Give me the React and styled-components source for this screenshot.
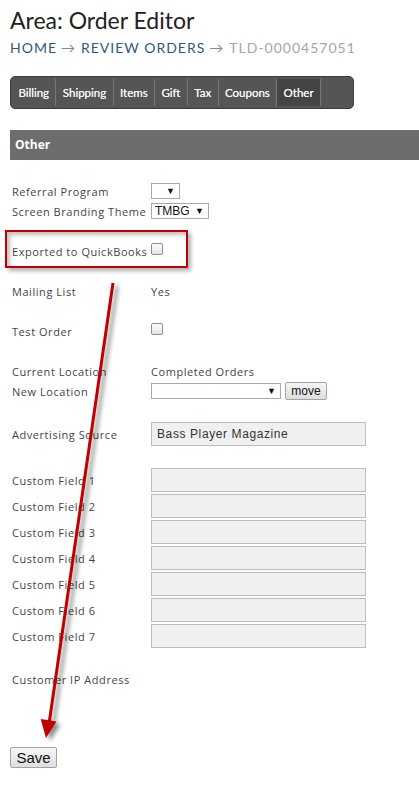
import React from 'react'
import styled, { createGlobalStyle } from 'styled-components'

const GlobalStyle = createGlobalStyle`
  body {
    margin: 0;
    background: #fff;
    font-family: "Open Sans", Arial, sans-serif;
  }
`

const Page = styled.div`
  position: relative;
  box-sizing: border-box;
  min-height: 786px;
  padding: 6px 0 20px 10px;
  overflow: hidden;
`

const Title = styled.h1`
  margin: 0;
  font-family: Lato, "Open Sans", sans-serif;
  font-weight: 400;
  font-size: 23px;
  line-height: 28px;
  color: #222;
`

const Crumbs = styled.div`
  margin-top: 5px;
  font-family: Lato, "Open Sans", sans-serif;
  font-size: 14px;
  line-height: 18px;
  letter-spacing: 1px;
  text-transform: uppercase;
`

const Crumb = styled.span`
  color: ${p => (p.$current ? '#a6a6a6' : '#2b5c79')};
`

const CrumbArrow = styled.span`
  color: #888;
  margin: 0 5px 0 4px;
`

const TabBar = styled.nav`
  display: flex;
  box-sizing: border-box;
  width: 344px;
  height: 33px;
  margin-top: 19px;
  padding: 2px 1px;
  background: #555;
  border: 1px solid #3d3d3d;
  border-radius: 5px;
`

const Tab = styled.a`
  display: flex;
  align-items: center;
  padding: 0 6.4px;
  border-right: 1px solid #777;
  background: ${p => (p.$active ? '#444' : 'transparent')};
  color: #f4f4f4;
  font-family: Lato, sans-serif;
  font-size: 11.5px;
  font-weight: 400;
  text-shadow: 0 0 0.4px #fff;
  text-decoration: none;
`

const SectionHeader = styled.h2`
  margin: 21px 0 0;
  height: 30px;
  padding-left: 5px;
  background: #6d6d6d;
  color: #fff;
  font-family: "Open Sans", sans-serif;
  font-size: 12px;
  font-weight: 700;
  line-height: 30px;
`

const Form = styled.div`
  display: flex;
  flex-direction: column;
  margin-top: 21px;
  padding-left: 2px;
`

const Row = styled.div`
  position: relative;
  display: grid;
  grid-template-columns: 139px 1fr;
  align-items: center;
  height: ${p => p.$h || 20}px;
`

const Label = styled.span`
  font-size: 11px;
  letter-spacing: 0.55px;
  color: #454545;
  white-space: nowrap;
`

const Value = styled.span`
  display: flex;
  align-items: center;
  gap: 4px;
  font-size: 11px;
  letter-spacing: 0.55px;
  color: #454545;
`

const Select = styled.div`
  display: inline-flex;
  align-items: center;
  justify-content: space-between;
  box-sizing: border-box;
  width: ${p => p.$w}px;
  height: 16px;
  padding: 0 4px 0 3px;
  background: #fff;
  border: 1px solid #a9a9a9;
  font-family: Arial, "Liberation Sans", sans-serif;
  font-size: 12px;
  letter-spacing: 0;
  color: #111;
`

const Caret = styled.span`
  font-size: 9px;
  color: #111;
`

const Check = styled.span`
  display: inline-block;
  box-sizing: border-box;
  width: 12px;
  height: 12px;
  margin-top: ${p => p.$lift || 0}px;
  border: 1px solid #8e8e8e;
  border-radius: 2px;
  background: linear-gradient(#fdfdfd, #e3e3e3);
`

const Field = styled.input`
  box-sizing: border-box;
  width: 215px;
  height: 24px;
  margin: 0;
  padding: 0 5px;
  background: #f0f0f0;
  border: 1px solid #bdbdbd;
  font-family: Arial, "Liberation Sans", sans-serif;
  font-size: 12px;
  letter-spacing: 0.6px;
  color: #333;
  outline: none;
`

const Button = styled.button`
  box-sizing: border-box;
  width: ${p => p.$w}px;
  height: ${p => p.$h}px;
  padding: 0;
  border: 1px solid #a3a3a3;
  border-radius: 2px;
  background: linear-gradient(#f6f6f6, #dedede);
  font-family: Arial, "Liberation Sans", sans-serif;
  font-size: ${p => p.$size}px;
  color: #111;
`

const Highlight = styled.div`
  position: absolute;
  left: -7px;
  top: -11px;
  width: 183px;
  height: 38px;
  box-sizing: border-box;
  border: 2px solid #c00000;
  box-shadow: 3px 3px 4px rgba(0, 0, 0, 0.3), inset 3px 3px 4px rgba(0, 0, 0, 0.25);
  pointer-events: none;
`

const SaveBar = styled.div`
  margin-top: 57px;
`

const Pointer = styled.svg`
  position: absolute;
  left: 0;
  top: 0;
  pointer-events: none;
`

const tabs = ['Billing', 'Shipping', 'Items', 'Gift', 'Tax', 'Coupons', 'Other']

export default function App() {
  return (
    <Page>
      <GlobalStyle />
      <Title>Area: Order Editor</Title>
      <Crumbs>
        <Crumb>Home</Crumb>
        <CrumbArrow>→</CrumbArrow>
        <Crumb>Review Orders</Crumb>
        <CrumbArrow>→</CrumbArrow>
        <Crumb $current>TLD-0000457051</Crumb>
      </Crumbs>

      <TabBar>
        {tabs.map(name => (
          <Tab key={name} href="#" $active={name === 'Other'}>
            {name}
          </Tab>
        ))}
      </TabBar>

      <SectionHeader>Other</SectionHeader>

      <Form>
        <Row>
          <Label>Referral Program</Label>
          <Value>
            <Select $w={29}><span /><Caret>▼</Caret></Select>
          </Value>
        </Row>
        <Row>
          <Label>Screen Branding Theme</Label>
          <Value>
            <Select $w={58}><span>TMBG</span><Caret>▼</Caret></Select>
          </Value>
        </Row>
        <Row />
        <Row>
          <Label>Exported to QuickBooks</Label>
          <Value><Check $lift={-5} /></Value>
          <Highlight />
        </Row>
        <Row />
        <Row>
          <Label>Mailing List</Label>
          <Value>Yes</Value>
        </Row>
        <Row />
        <Row>
          <Label>Test Order</Label>
          <Value><Check $lift={-5} /></Value>
        </Row>
        <Row />
        <Row>
          <Label>Current Location</Label>
          <Value>Completed Orders</Value>
        </Row>
        <Row>
          <Label>New Location</Label>
          <Value>
            <Select $w={130}><span /><Caret>▼</Caret></Select>
            <Button $w={42} $h={18} $size={12}>move</Button>
          </Value>
        </Row>
        <Row />
        <Row $h={26}>
          <Label>Advertising Source</Label>
          <Value><Field defaultValue="Bass Player Magazine" /></Value>
        </Row>
        <Row />
        {[1, 2, 3, 4, 5, 6, 7].map(n => (
          <Row key={n} $h={26}>
            <Label>Custom Field {n}</Label>
            <Value><Field defaultValue="" /></Value>
          </Row>
        ))}
        <Row />
        <Row>
          <Label>Customer IP Address</Label>
          <Value />
        </Row>
      </Form>

      <SaveBar>
        <Button $w={47} $h={21} $size={15}>Save</Button>
      </SaveBar>

      <Pointer width="419" height="786" viewBox="0 0 419 786">
        <defs>
          <filter id="drop" x="-50%" y="-10%" width="200%" height="120%">
            <feDropShadow dx="4" dy="3" stdDeviation="2" floodColor="#000" floodOpacity="0.45" />
          </filter>
        </defs>
        <g filter="url(#drop)">
          <line x1="113" y1="283" x2="49" y2="724" stroke="#c00000" strokeWidth="3" />
          <polygon points="46,738 40.7,719 56.5,721.4" fill="#c00000" />
        </g>
      </Pointer>
    </Page>
  )
}
